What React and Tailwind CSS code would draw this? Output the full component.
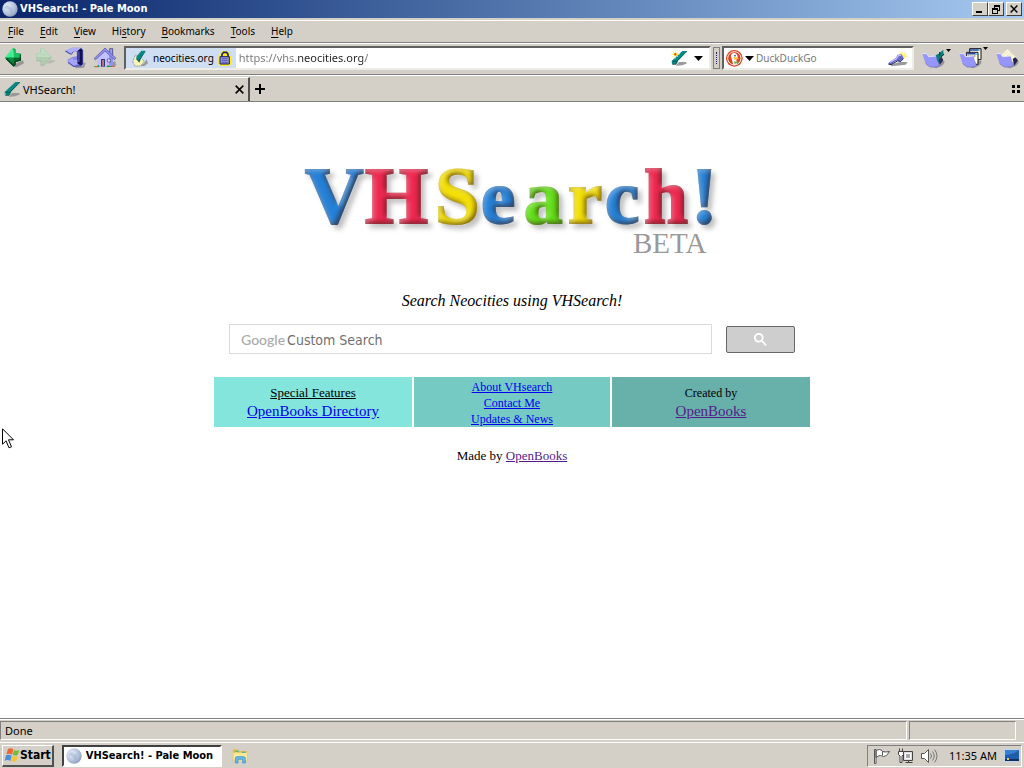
import React from 'react';

const sunken = 'border border-t-[#808080] border-l-[#808080] border-r-white border-b-white';
const caption = "font-['DejaVu_Sans_Condensed','DejaVu_Sans',sans-serif] font-bold";

function Moon({ className }) {
  return (
    <svg className={className} viewBox="0 0 16 16" aria-hidden="true">
      <defs>
        <radialGradient id="moon" cx="0.35" cy="0.35" r="0.75">
          <stop offset="0" stopColor="#e9f0fa" />
          <stop offset="0.6" stopColor="#b4c3dc" />
          <stop offset="1" stopColor="#8393b5" />
        </radialGradient>
      </defs>
      <circle cx="8" cy="8" r="7.7" fill="url(#moon)" />
      <path d="M3 6q2-3 4-1t3 1 1 4-3 1-2-3-3-1z" fill="#a1b3d0" opacity=".55" />
    </svg>
  );
}

function BackIcon() {
  return (
    <svg width="22" height="22" viewBox="15 143 66 66" aria-hidden="true">
      <path d="M46 202l6-10 20-9 3 9-22 12z" fill="#969696" />
      <path d="M18 175l24-30 8 5v10l16 3v21l-16 4v9l-6 5z" fill="#12a04c" />
      <path d="M18 175l24-30 3 30z" fill="#38f090" />
      <path d="M45 150l4 10 16 4v11H44z" fill="#1dbd60" />
      <path d="M18 175h48v9l-16 4v9l-6 5z" fill="#07602e" />
      <path d="M24 175h20v18z" fill="#0c8c42" />
      <path d="M21 172l21-24v26" fill="none" stroke="#a8ffc8" strokeWidth="2" strokeDasharray="3 2" />
      <path d="M22 180l22 20 4-5v-9l16-3v-18" fill="none" stroke="#003818" strokeWidth="3" />
    </svg>
  );
}

function ForwardIcon() {
  return (
    <svg width="22" height="22" viewBox="102 143 66 66" aria-hidden="true">
      <path d="M132 200l18-18h14v4l-10 6-14 1z" fill="#bcb9b1" />
      <path d="M108 163l12-3v-13h11l26 27-26 27h-9v-13l-14-4z" fill="#b4ccb2" />
      <path d="M110 165l13-3v-13h8l22 24h-43z" fill="#bfdcc0" />
      <path d="M110 184h13v14h6l24-25" fill="none" stroke="#98b298" strokeWidth="3" strokeDasharray="3" />
      <path d="M114 176h36M125 186h18M125 166h18" stroke="#aac4aa" strokeWidth="2" strokeDasharray="3" />
    </svg>
  );
}

function ReloadIcon() {
  return (
    <svg width="22" height="22" viewBox="192 141 66 66" aria-hidden="true">
      <path d="M224 197h24l3-10 6 3-5 13-25 2z" fill="#969696" />
      <path d="M196 152l20-9h28l6 8v42l-6 6-24 2-17-14v-8l14-8 13-2v-14h-12l-6 9-16-8z" fill="#8585e6" />
      <path d="M196 152l20-9h27l-9 9-15 3-6 8z" fill="#b0b0ff" />
      <path d="M233 152l10-7 5 6v42l-6 4-12-9z" fill="#101052" />
      <path d="M232 154h7v32h-7z" fill="#4949a5" />
      <path d="M203 182l16-9v6h13v13l-10 6z" fill="#a5a5fc" />
      <path d="M197 153l17 10 6-8M204 188l17 11 23-2" fill="none" stroke="#4b4ba6" strokeWidth="3" />
    </svg>
  );
}

function HomeIcon() {
  return (
    <svg width="24" height="22" viewBox="277 142 72 66" aria-hidden="true">
      <path d="M326 193l17-9 4 13-17 5z" fill="#999" />
      <path d="M327 147h9v22h-9z" fill="#a0a0f2" stroke="#28286c" strokeWidth="2" />
      <path d="M289 174l24-24 24 24v27h-48z" fill="#c1c1ff" />
      <path d="M325 165l12 10v26h-12z" fill="#9292ea" />
      <path d="M280 177l33-32 33 31-5 4-28-26-28 26z" fill="#9292f0" stroke="#4848a0" strokeWidth="2" />
      <path d="M301 178h12v23h-12z" fill="#343474" />
      <path d="M304 181h6v19h-6z" fill="#b27580" />
      <path d="M320 178h9v9h-9z" fill="#e5e5ff" stroke="#39397b" strokeWidth="2" />
      <path d="M280 200h9l4-5 5 7h-18zM316 202l6-6 5 4 12-2 5 4z" fill="#27964f" />
      <path d="M283 201h9M333 200h9" stroke="#e26645" strokeWidth="4" />
    </svg>
  );
}

function PenIcon({ sparkle = false, paper = false }) {
  return (
    <svg width="17" height="17" viewBox="0 0 51 51" aria-hidden="true">
      <path d={paper ? 'M24 48l12-8 8-12 4 12-11 8z' : 'M14 47l10-11h21l3 4-14 6z'} fill="#999" />
      {paper && <path d="M2 35l8-20 16 5 10 15-10 13H9z" fill="#f9f4b5" stroke="#506080" strokeWidth="2" strokeDasharray="3 2" />}
      <path d={paper ? 'M13 20L28 2h12L27 24l-4 13-10-9z' : 'M2 33L34 3h14L20 34l-5 9H3z'} fill="#078985" />
      <path d={paper ? 'M19 35L40 4M13 27l10 9' : 'M4 34h13L48 4M4 43h11l5-9'} fill="none" stroke="#003b3a" strokeWidth="2" />
      {!paper && !sparkle && <path d="M4 35v7" stroke="#2fd0b0" strokeWidth="3" />}
      {sparkle && (
        <g stroke="#ffe83a" strokeWidth="2.5">
          <path d="M13 1v25M1 13h25M5 5l16 16M21 5L5 21" />
          <path d="M11 11h4v4h-4z" fill="#f27822" stroke="#d54c00" />
        </g>
      )}
    </svg>
  );
}

function LockIcon() {
  return (
    <svg width="14" height="15" viewBox="0 0 42 45" aria-hidden="true">
      <path d="M8 5l6-5h14l7 7v8h5v23l-5 6H6l-5-5V17l5-4z" fill="#fff000" />
      <path d="M12 19v-9l5-6h9l4 6v9" fill="none" stroke="#22226b" strokeWidth="5" />
      <path d="M6 17h28v22H6z" fill="#9696e7" stroke="#202060" strokeWidth="3" />
      <path d="M11 23h18M11 29h18M11 35h18" stroke="#404095" strokeWidth="2" />
    </svg>
  );
}

function DuckIcon() {
  return (
    <svg width="17" height="17" viewBox="0 0 51 51" aria-hidden="true">
      <circle cx="25" cy="25" r="25" fill="#dc4424" />
      <circle cx="25" cy="25" r="20" fill="none" stroke="#fff2e8" strokeWidth="3" />
      <path d="M17 12c6-7 17-2 18 7 1 7-4 9-4 13l3 11-12 2-5-19c-2-5-4-9 0-14z" fill="#fff" />
      <path d="M23 21l12 2 4 4-14 2z" fill="#ffba20" />
      <circle cx="27" cy="17" r="2.5" fill="#294f76" />
      <path d="M25 33l7 3 5-3v9l-6-2-6 2z" fill="#5cae50" />
    </svg>
  );
}

function FlashlightIcon() {
  return (
    <svg width="20" height="17" viewBox="745 152 60 51" aria-hidden="true">
      <path d="M776 170l10-14 5 8 8-8-2 11 8 3-14 9z" fill="#fff176" />
      <path d="M753 195l28-7h23l-6 8-42 5z" fill="#999" />
      <path d="M747 190l22-15 5-9 12-1 6 12-10 8-12-1-18 12h-6z" fill="#6868c4" />
      <path d="M750 189l20-11 6-9 9-2" fill="none" stroke="#bdbdff" strokeWidth="4" />
      <path d="M747 194l7 2 19-11 11 1 7-8" fill="none" stroke="#202060" strokeWidth="3" />
    </svg>
  );
}

function FolderIcon({ kind }) {
  return (
    <svg width="24" height="22" viewBox="0 0 72 66" aria-hidden="true">
      <path d="M31 60l22-18h15l-2 8-7 7-8 3-8 4z" fill="#969696" />
      {kind === 'marks' && (
        <g>
          <path d="M40 25l9-4 15-13v10l3 4-13 9-3 20-10-16z" fill="#07817d" />
          <path d="M53 15v11M66 22L52 34" fill="none" stroke="#053335" strokeWidth="3" />
          <path d="M50 38l9-8 5 10-11 14z" fill="#2b2b59" />
        </g>
      )}
      {kind === 'history' && (
        <g stroke="#101018" strokeWidth="3">
          <path d="M32 5h34v33H32z" fill="#ffffe3" />
          <path d="M23 16h34v36H23z" fill="#ffffe3" />
          <path d="M33 9h30M25 20h30" stroke="#2a45a5" strokeWidth="5" />
          <path d="M58 9h5M49 20h5" stroke="#78efff" strokeWidth="4" />
          <path d="M28 27h24" stroke="#151525" strokeDasharray="3" />
        </g>
      )}
      {kind === 'plain' && (
        <g>
          <path d="M7 32L34 5l27 26-12 22-34-7z" fill="#fffde1" />
          <path d="M10 31L34 7l25 25M19 30l15-15 17 17M26 32l8-8 10 9" fill="none" stroke="#bdb588" strokeWidth="2" strokeDasharray="3 2" />
          <path d="M50 36l8-5 8 9-11 16z" fill="#26264f" />
        </g>
      )}
      <path d="M1 20h13l6 9 22-2 3 12 8 17-12 4H24L11 50z" fill="#9696fa" />
      <path d="M1 20h13l6 9 22-2" fill="none" stroke="#e4e4ff" strokeWidth="3" />
      <path d="M43 29l3 11 7 16-12 4H24L11 50" fill="none" stroke="#6c6ccc" strokeWidth="2" />
    </svg>
  );
}

function Caret({ small = false }) {
  return (
    <svg width={small ? 5 : 9} height={small ? 3 : 5} viewBox="0 0 9 5" preserveAspectRatio="none" aria-hidden="true">
      <path d="M0 0h9L4.5 5z" fill="#000" />
    </svg>
  );
}

function CloseGlyph({ size = 8 }) {
  return (
    <svg width={size} height={size} viewBox="0 0 8 8" aria-hidden="true">
      <path d="M.6.6l6.8 6.8M7.4.6L.6 7.4" stroke="#000" strokeWidth="1.4" />
    </svg>
  );
}

function TitleBar() {
  const btn = 'flex h-[14px] w-4 items-center justify-center border border-t-white border-r-[#404040] border-b-[#404040] border-l-white bg-[#d4d0c8]';
  return (
    <header className="flex h-[18px] shrink-0 items-center bg-linear-to-r from-[#0a246a] to-[#a6caf0] px-0.5 text-white">
      <Moon className="size-4" />
      <h1 className={`ml-0.5 flex-1 ${caption}`}>VHSearch! - Pale Moon</h1>
      <button aria-label="Minimize" className={btn}>
        <svg width="8" height="8" viewBox="0 0 8 8"><path d="M0 6h6v2H0z" /></svg>
      </button>
      <button aria-label="Restore" className={btn}>
        <svg width="9" height="9" viewBox="0 0 9 9" shapeRendering="crispEdges">
          <path d="M2 0h6v6H6V5h1V2H3v1H2zM0 3h6v6H0zm1 2v3h4V5z" fillRule="evenodd" />
        </svg>
      </button>
      <button aria-label="Close" className={`ml-0.5 ${btn}`}><CloseGlyph /></button>
    </header>
  );
}

const menus = [['', 'F', 'ile'], ['', 'E', 'dit'], ['', 'V', 'iew'], ['Hi', 's', 'tory'], ['', 'B', 'ookmarks'], ['', 'T', 'ools'], ['', 'H', 'elp']];

function MenuBar() {
  return (
    <nav className="mt-0.5 flex h-[22px] shrink-0 items-center border-t border-white pb-0.5 text-[10px]">
      {menus.map(([a, k, b]) => (
        <button key={k} className="px-2">{a}<u className="underline-offset-2">{k}</u>{b}</button>
      ))}
    </nav>
  );
}

function Toolbar() {
  const nav = 'flex w-[30px] items-center justify-center';
  const field = 'flex h-6 items-center border-2 border-t-[#606060] border-l-[#606060] border-r-[#eeece6] border-b-[#eeece6] bg-white';
  return (
    <div className="flex h-8 shrink-0 items-center border-t border-t-[#808080] pb-px shadow-[inset_0_1px_0_white]">
      <button className={nav} aria-label="Back"><BackIcon /></button>
      <button className={nav} aria-label="Forward"><ForwardIcon /></button>
      <button className={nav} aria-label="Reload"><ReloadIcon /></button>
      <button className={nav} aria-label="Home"><HomeIcon /></button>
      <div className={`ml-1 min-w-0 flex-1 ${field}`}>
        <button className="flex h-full shrink-0 items-center bg-[#d0def4] pr-1 pl-1.5 text-[10px]">
          <PenIcon paper />
          <span className="mx-1">neocities.org</span>
          <LockIcon />
        </button>
        <input
          aria-label="Address"
          defaultValue="https://vhs.neocities.org/"
          className="min-w-0 flex-1 bg-[linear-gradient(to_right,#777_60px,#222_60px,#222_127px,#777_127px)] bg-clip-text px-[3px] text-transparent outline-none"
        />
        <button aria-label="Bookmark this page"><PenIcon sparkle /></button>
        <button aria-label="Show history" className="px-1.5"><Caret /></button>
      </div>
      <div className="mx-0.5 flex h-[22px] w-[7px] items-center justify-center border border-[#808080]">
        <span className="h-3 border-l border-dotted border-[#202060]" />
      </div>
      <div className={`w-48 shrink-0 ${field}`}>
        <button aria-label="Choose search engine" className="flex items-center gap-0.5 px-0.5"><DuckIcon /><Caret /></button>
        <input aria-label="Search the web" placeholder="DuckDuckGo" className="min-w-0 flex-1 text-[10px] outline-none placeholder:text-[#777]" />
        <button aria-label="Search" className="px-1"><FlashlightIcon /></button>
      </div>
      <button aria-label="Bookmarks" className="ml-2 flex items-start"><FolderIcon kind="marks" /><span className="mt-0.5 flex h-3"><Caret small /></span></button>
      <button aria-label="History" className="ml-2 flex items-start"><FolderIcon kind="history" /><Caret small /></button>
      <button aria-label="Downloads" className="mr-1 ml-2"><FolderIcon kind="plain" /></button>
    </div>
  );
}

function TabStrip() {
  return (
    <div className="flex h-7 shrink-0 items-stretch border-t border-b border-[#808080] shadow-[inset_0_1px_0_white]">
      <div className="mt-0.5 flex w-[250px] items-center border-t border-r-2 border-t-white border-r-[#505050] pr-1 pl-1">
        <PenIcon />
        <span className="ml-0.5 flex-1">VHSearch!</span>
        <button aria-label="Close tab"><CloseGlyph size={9} /></button>
      </div>
      <button aria-label="New tab" className="px-[5px] pt-0.5">
        <svg width="10" height="10" viewBox="0 0 10 10"><path d="M4 0h2v4h4v2H6v4H4V6H0V4h4z" /></svg>
      </button>
      <button aria-label="All tabs" className="mr-1 ml-auto pt-0.5">
        <svg width="8" height="8" viewBox="0 0 8 8"><path d="M0 0h3v3H0zM5 0h3v3H5zM0 5h3v3H0zM5 5h3v3H5z" /></svg>
      </button>
    </div>
  );
}

const letters = [
  ['V', 5, '#2480d8', 81], ['H', 65, '#ee2850', 81], ['S', 135, '#f4e008', 80], ['e', 181, '#2480d8', 77], ['a', 224, '#62e018', 77],
  ['r', 268, '#f4e008', 77], ['c', 305, '#2480d8', 77], ['h', 344, '#ee2850', 79], ['!', 391, '#2480d8', 80],
];

function Logo() {
  return (
    <svg width="424" height="120" viewBox="0 -16 424 120" className="max-w-full" role="img" aria-label="VHSearch! Beta">
      <defs>
        <filter id="bevel" x="-5%" y="-10%" width="112%" height="130%" colorInterpolationFilters="sRGB">
          <feGaussianBlur in="SourceAlpha" stdDeviation="2.4" result="soft" />
          <feOffset in="soft" dx="-2" dy="-2" result="inner" />
          <feComposite in="SourceAlpha" in2="inner" operator="out" result="edge" />
          <feFlood floodColor="#301008" floodOpacity=".65" />
          <feComposite in2="edge" operator="in" result="dark" />
          <feOffset in="soft" dx="2" dy="2" result="innerLit" />
          <feComposite in="SourceAlpha" in2="innerLit" operator="out" result="litEdge" />
          <feFlood floodColor="#ffffff" floodOpacity=".35" />
          <feComposite in2="litEdge" operator="in" result="shine" />
          <feGaussianBlur in="SourceAlpha" stdDeviation="2.5" />
          <feOffset dx="4" dy="4" result="cast" />
          <feFlood floodColor="#000000" floodOpacity=".25" />
          <feComposite in2="cast" operator="in" result="shadow" />
          <feMerge>
            <feMergeNode in="shadow" />
            <feMergeNode in="SourceGraphic" />
            <feMergeNode in="dark" />
            <feMergeNode in="shine" />
          </feMerge>
        </filter>
      </defs>
      <text y="63" fontFamily="Liberation Serif, serif" fontWeight="700" strokeWidth="2" filter="url(#bevel)">
        {letters.map(([l, x, c, size]) => <tspan key={x} x={x} fill={c} stroke={c} fontSize={size}>{l}</tspan>)}
      </text>
      <text x="333" y="93" fontFamily="Liberation Serif, serif" fontSize="29" fill="#999">BETA</text>
    </svg>
  );
}

function Page() {
  const link = 'text-[#0000ee] underline';
  const cell = 'flex min-h-[50px] flex-col items-center justify-center pt-0.5 text-[12px]';
  return (
    <main className="flex flex-1 flex-col items-center bg-white pt-[42px] font-['Liberation_Serif',serif] text-[13px] leading-4">
      <Logo />
      <p className="mt-[27px] text-base leading-5 italic">Search Neocities using VHSearch!</p>
      <form className="mt-[13px] flex w-full max-w-[566px] items-center gap-3.5" onSubmit={(e) => e.preventDefault()}>
        <label className="flex h-[30px] flex-1 items-center gap-0.5 border border-[#d9d9d9] pt-0.5 pl-[11px]">
          <span className="font-['Lato',sans-serif] text-[14px] font-medium text-[#aaa]">Google</span>
          <input placeholder="Custom Search" className="min-w-0 flex-1 font-['DejaVu_Sans_Condensed','DejaVu_Sans',sans-serif] text-[14px] outline-none placeholder:text-[#707070]" />
        </label>
        <button aria-label="Search" className="flex h-[27px] w-[69px] items-center justify-center rounded-xs border border-[#666] bg-[#cecece]">
          <svg width="13" height="13" viewBox="0 0 13 13" fill="#fff">
            <path d="m4.8 7.8c-1.7 0-3-1.3-3-3s1.3-3 3-3 3 1.3 3 3-1.3 3-3 3m4.5 0h-.5l-.2-.2c.6-.7 1-1.7 1-2.8 0-2.7-2.1-4.8-4.8-4.8s-4.8 2.2-4.8 4.8 2.1 4.8 4.8 4.8c1.1 0 2.1-.4 2.9-1l.2.2v.5l3.7 3.7 1.1-1.1z" />
          </svg>
        </button>
      </form>
      <section className="mt-[23px] grid w-full max-w-[596px] grid-cols-[198fr_196fr_198fr] gap-0.5">
        <div className={`${cell} bg-[#84e5dc]`}>
          <span className="text-[13px] underline">Special Features</span>
          <a href="#directory" className={`${link} text-[15px] leading-5`}>OpenBooks Directory</a>
        </div>
        <div className={`${cell} bg-[#75cbc3]`}>
          <a href="#about" className={link}>About VHsearch</a>
          <a href="#contact" className={link}>Contact Me</a>
          <a href="#updates" className={link}>Updates &amp; News</a>
        </div>
        <div className={`${cell} bg-[#67b1aa]`}>
          <span>Created by</span>
          <a href="#openbooks" className="text-[15px] leading-5 text-[#551a8b] underline">OpenBooks</a>
        </div>
      </section>
      <p className="mt-[21px]">Made by <a href="#openbooks" className="text-[#551a8b] underline">OpenBooks</a></p>
    </main>
  );
}

function StatusBar() {
  return (
    <footer className="flex h-6 shrink-0 gap-0.5 border-t border-[#808080] pt-0.5 pr-2 pb-0.5 shadow-[inset_0_1px_0_white]">
      <div className={`flex flex-1 items-center pl-1 ${sunken}`}>Done</div>
      <div className={`w-[107px] ${sunken}`} />
    </footer>
  );
}

function Taskbar() {
  return (
    <footer className="flex h-[26px] shrink-0 items-center border-t border-white px-0.5">
      <button className={`flex h-[22px] items-center px-px text-xs ${caption} border-t border-r-2 border-b-2 border-l border-t-white border-r-[#505050] border-b-[#505050] border-l-white`}>
        <svg width="16" height="16" viewBox="0 0 48 48" aria-hidden="true">
          <path d="M12 6q9-5 16 1l-4 16q-8-5-17-1z" fill="#ef6534" />
          <path d="M30 9q7 5 16 0l-5 15q-8 4-15-1z" fill="#78ba38" />
          <path d="M6 25q9-4 17 1l-4 16q-7-5-17-1z" fill="#4b8fdb" />
          <path d="M25 27q8 4 16 0l-4 15q-8 4-16-1z" fill="#fac335" />
        </svg>
        Start
      </button>
      <button className={`ml-2 flex h-[22px] w-40 items-center gap-1 border-2 border-t-[#404040] border-r-white border-b-white border-l-[#404040] bg-white pl-0.5 ${caption}`}>
        <Moon className="size-4 shrink-0" />
        <span className="whitespace-nowrap">VHSearch! - Pale Moon</span>
      </button>
      <button aria-label="Explorer" className="ml-2.5">
        <svg width="16" height="16" viewBox="0 0 48 48" aria-hidden="true">
          <path d="M2 7q0-3 3-3h12l4 5h22q3 0 3 3v27H2z" fill="#e3bd51" />
          <path d="M4 14h41v24H4z" fill="#fae99b" />
          <path d="M9 10h12M29 13h12" stroke="#62b38a" strokeWidth="4" />
          <path d="M10 45V31q0-5 5-5h20q5 0 5 5v14h-8V34H18v11z" fill="#65b9e8" stroke="#348bc1" strokeWidth="2" />
        </svg>
      </button>
      <div className={`ml-auto flex h-[22px] items-center gap-[7px] pr-px pl-1.5 ${sunken}`}>
        <svg width="16" height="16" viewBox="0 0 16 16" fill="#fff" stroke="#555" aria-hidden="true">
          <path d="M.5 15.500v-14H2v14zM2 2.500q4-2 6 0l.5 1q3 1 7 0l-3 4q-3 2-6 0-2 0-4.500 2zM8.500 3.500v4" />
        </svg>
        <svg width="17" height="16" viewBox="0 0 17 16" fill="#ddd" stroke="#444" aria-hidden="true">
          <path d="M6.500 3.500h9v9h-9zM8.500 14.500h7M11.500 13v1.500" />
          <path d="M8.500 5.500h5v5h-5z" fill="#aaa" stroke="#fff" />
          <path d="M1.500 3.500h5v3l-1.500 1.500v6.500H3V8L1.500 6.500zM2.500 3V.5M5.500 3V.5" fill="#fff" />
        </svg>
        <svg width="17" height="16" viewBox="0 0 17 16" fill="#fff" stroke="#555" aria-hidden="true">
          <path d="M.5 5.500h3l4-4v13l-4-4h-3z" />
          <path d="M9.500 5.500q2 2.500 0 5M11.500 3.500q3.500 4.500 0 9M13.500 1.500q5 6.500 0 13" fill="none" stroke="#777" />
        </svg>
        <time className="ml-1">11:35 AM</time>
        <svg width="16" height="13" viewBox="0 0 16 13" aria-hidden="true">
          <path d="M0 0h16v13H0z" fill="#bed5ef" />
          <path d="M1 1h14v9H1z" fill="#3b80cf" />
          <path d="M1 6q7 0 14-5v9H1z" fill="#1f5cab" />
          <path d="M1 10h14v2H1z" fill="#122f60" />
          <path d="M3 9h2v2H3z" fill="#edcf55" />
        </svg>
      </div>
    </footer>
  );
}

export default function App() {
  return (
    <div className="flex min-h-screen flex-col bg-[#d4d0c8] font-['Noto_Sans',sans-serif] text-[11px] leading-4 text-black">
      <TitleBar />
      <MenuBar />
      <Toolbar />
      <TabStrip />
      <Page />
      <StatusBar />
      <Taskbar />
      <svg className="pointer-events-none fixed top-[428px] left-[2px]" width="12" height="21" viewBox="0 0 12 21" aria-hidden="true">
        <path d="M.5.8v15.500l3.500-3.500 3 7 2.500-1-3-7h5z" fill="#fff" stroke="#000" />
      </svg>
    </div>
  );
}
